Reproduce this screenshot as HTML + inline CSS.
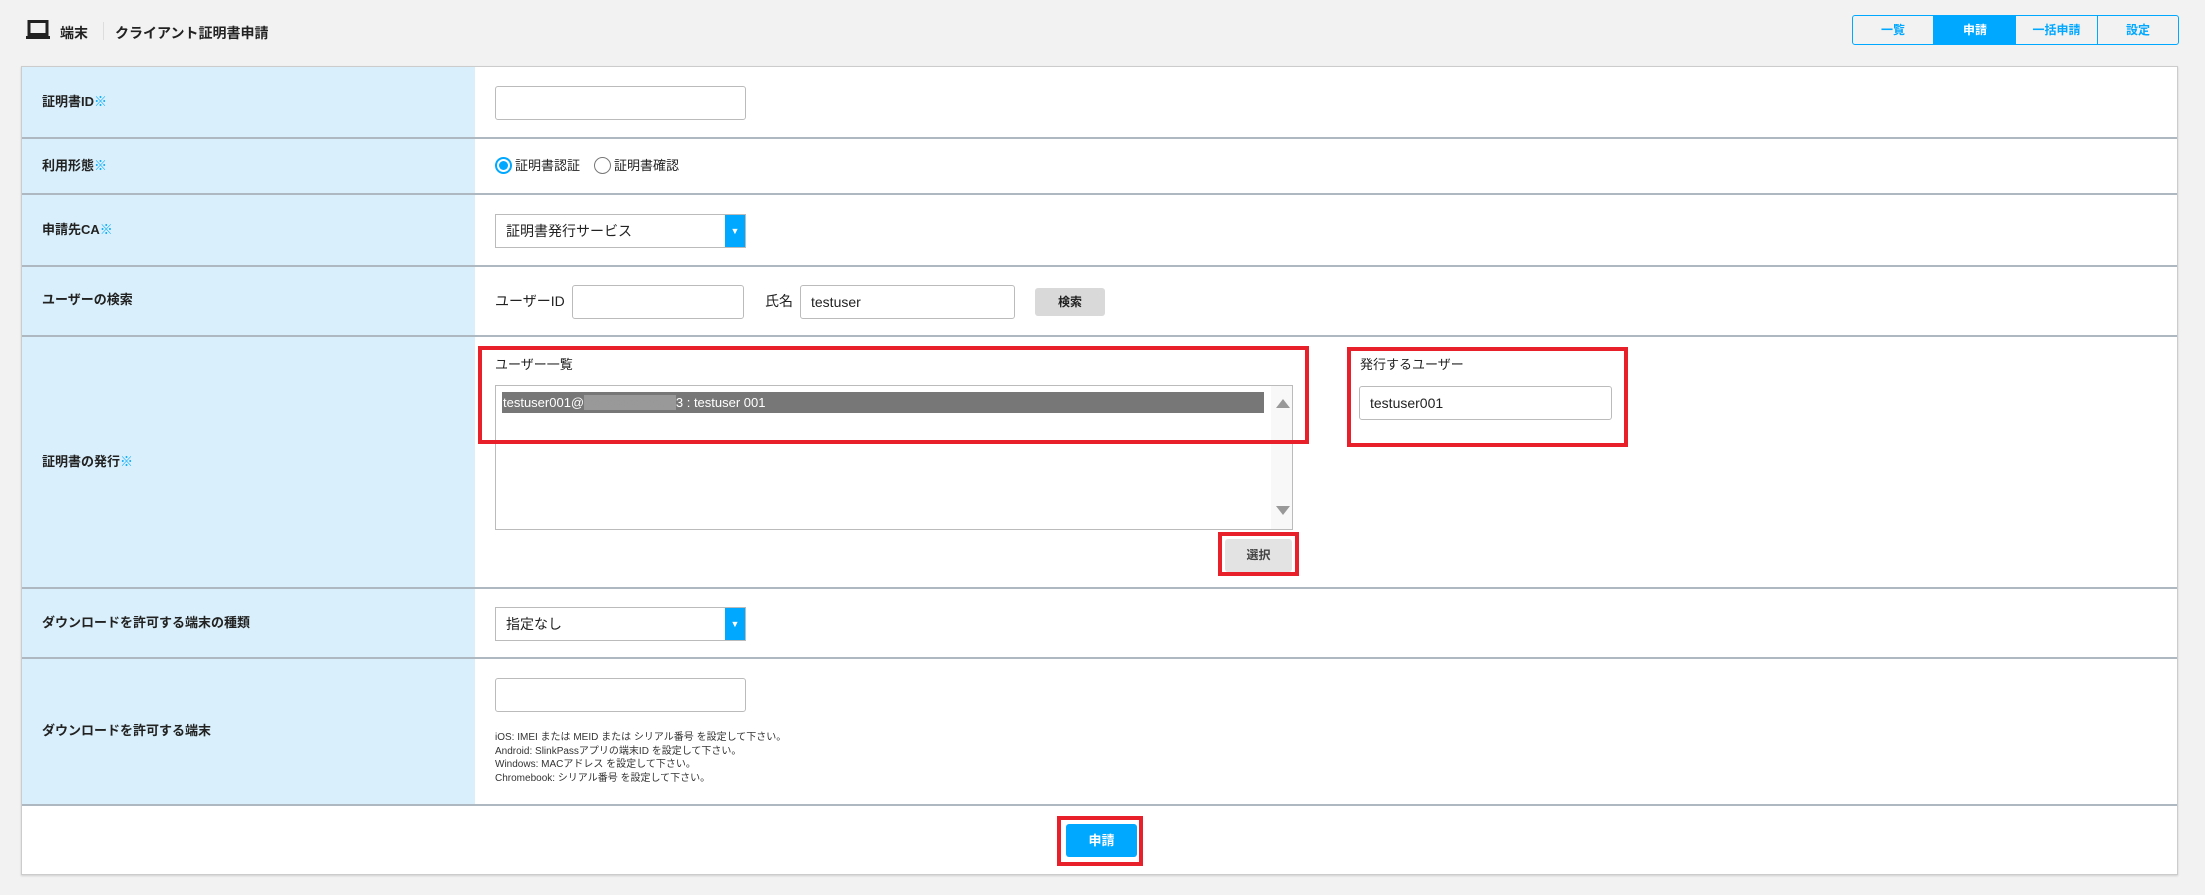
<!DOCTYPE html>
<html><head><meta charset="utf-8"><style>
*{box-sizing:border-box;margin:0;padding:0}
body{width:2205px;height:895px;background:#f2f2f2;font-family:"Liberation Sans","Noto Sans CJK JP",sans-serif;color:#222;position:relative;overflow:hidden}
.a{position:absolute}
.panel{left:21px;top:66px;width:2157px;height:809px;background:#fff;border:1px solid #ccc;box-shadow:0 1px 2px rgba(0,0,0,.15)}
.lab{left:22px;width:453px;background:#d9f0fc}
.hr{left:22px;width:2155px;height:2px;background:#aeb8c0}
.lt{left:42px;font-size:13px;font-weight:bold;line-height:16px}
.lt span{color:#00a8ff;font-weight:normal}
.inp{background:#fff;border:1px solid #bbb;border-radius:3px}
.sel{background:#fff;border:1px solid #bbb}
.sel .arr{position:absolute;right:0;top:0;bottom:0;width:20px;background:#00a8ff;color:#fff;font-size:9px;text-align:center}
.t{font-size:14px;line-height:16px}
.red{border:4px solid #e8202a}
</style></head><body>
<svg class="a" style="left:25px;top:20px" width="26" height="20" viewBox="0 0 26 20"><rect x="4" y="1.5" width="18" height="13" fill="none" stroke="#222" stroke-width="3"/><rect x="1" y="16" width="24" height="3" fill="#222"/></svg>
<div class="a" style="left:60px;top:23px;font-size:14px;font-weight:bold">端末</div>
<div class="a" style="left:103px;top:22px;width:1px;height:18px;background:#ddd"></div>
<div class="a" style="left:115px;top:23px;font-size:14px;font-weight:bold">クライアント証明書申請</div>

<div class="a" style="left:1852px;top:15px;width:327px;height:30px;border:1px solid #00a8ff;border-radius:3px;background:#f2f2f2;font-size:12px;font-weight:bold;color:#00a8ff;display:flex;overflow:hidden">
<div style="width:81px;text-align:center;line-height:28px;border-right:1px solid #00a8ff">一覧</div>
<div style="width:82px;text-align:center;line-height:28px;background:#00a8ff;color:#fff">申請</div>
<div style="width:82px;text-align:center;line-height:28px;border-right:1px solid #00a8ff">一括申請</div>
<div style="flex:1;text-align:center;line-height:28px">設定</div>
</div>

<div class="a panel"></div>
<div class="a lab" style="top:67px;height:738px"></div>
<div class="a hr" style="top:137px"></div>
<div class="a hr" style="top:193px"></div>
<div class="a hr" style="top:265px"></div>
<div class="a hr" style="top:335px"></div>
<div class="a hr" style="top:587px"></div>
<div class="a hr" style="top:657px"></div>
<div class="a hr" style="top:804px"></div>

<div class="a lt" style="top:94px">証明書ID<span>※</span></div>
<div class="a lt" style="top:158px">利用形態<span>※</span></div>
<div class="a lt" style="top:222px">申請先CA<span>※</span></div>
<div class="a lt" style="top:292px">ユーザーの検索</div>
<div class="a lt" style="top:454px">証明書の発行<span>※</span></div>
<div class="a lt" style="top:615px">ダウンロードを許可する端末の種類</div>
<div class="a lt" style="top:723px">ダウンロードを許可する端末</div>

<div class="a inp" style="left:495px;top:86px;width:251px;height:34px"></div>

<div class="a" style="left:495px;top:157px;width:17px;height:17px;border-radius:50%;border:2px solid #00a8ff;background:#fff"><div style="margin:2px;width:9px;height:9px;border-radius:50%;background:#00a8ff"></div></div>
<div class="a t" style="left:515px;top:158px;font-size:13px">証明書認証</div>
<div class="a" style="left:594px;top:157px;width:17px;height:17px;border-radius:50%;border:1px solid #777;background:#fff"></div>
<div class="a t" style="left:614px;top:158px;font-size:13px">証明書確認</div>

<div class="a sel" style="left:495px;top:214px;width:251px;height:34px"><div class="t a" style="left:10px;top:8px">証明書発行サービス</div><div class="arr" style="line-height:32px">▼</div></div>

<div class="a t" style="left:495px;top:293px">ユーザーID</div>
<div class="a inp" style="left:572px;top:285px;width:172px;height:34px"></div>
<div class="a t" style="left:765px;top:293px">氏名</div>
<div class="a inp" style="left:800px;top:285px;width:215px;height:34px"><div class="t a" style="left:10px;top:8px">testuser</div></div>
<div class="a" style="left:1035px;top:288px;width:70px;height:28px;background:#d9d9d9;border-radius:3px;font-size:12px;font-weight:bold;text-align:center;line-height:28px">検索</div>

<div class="a t" style="left:495px;top:357px;font-size:13px">ユーザー一覧</div>
<div class="a" style="left:495px;top:385px;width:798px;height:145px;border:1px solid #bbb;background:#fff"></div>
<div class="a" style="left:1271px;top:386px;width:21px;height:143px;background:#f8f8f8"></div>
<div class="a" style="left:1276px;top:399px;width:0;height:0;border-left:7px solid transparent;border-right:7px solid transparent;border-bottom:9px solid #999"></div>
<div class="a" style="left:1276px;top:506px;width:0;height:0;border-left:7px solid transparent;border-right:7px solid transparent;border-top:9px solid #999"></div>
<div class="a" style="left:502px;top:392px;width:762px;height:21px;background:#777;color:#fff;font-size:13px;line-height:21px;padding-left:1px">testuser001@<span style="background:#999;color:#999">xxxxxxxxxxxx.jp</span>3 : testuser 001</div>
<div class="a red" style="left:478px;top:346px;width:831px;height:98px"></div>

<div class="a" style="left:1225px;top:539px;width:67px;height:33px;background:#e3e3e3;border-radius:3px;font-size:12px;font-weight:bold;color:#444;text-align:center;line-height:33px">選択</div>
<div class="a red" style="left:1218px;top:532px;width:81px;height:44px"></div>

<div class="a t" style="left:1360px;top:357px;font-size:13px">発行するユーザー</div>
<div class="a inp" style="left:1359px;top:386px;width:253px;height:34px"><div class="t a" style="left:10px;top:8px">testuser001</div></div>
<div class="a red" style="left:1347px;top:347px;width:281px;height:100px"></div>

<div class="a sel" style="left:495px;top:607px;width:251px;height:34px"><div class="t a" style="left:10px;top:8px">指定なし</div><div class="arr" style="line-height:32px">▼</div></div>

<div class="a inp" style="left:495px;top:678px;width:251px;height:34px"></div>
<div class="a" style="left:495px;top:731px;font-size:10px;line-height:13.5px;color:#333">iOS: IMEI または MEID または シリアル番号 を設定して下さい。<br>Android: SlinkPassアプリの端末ID を設定して下さい。<br>Windows: MACアドレス を設定して下さい。<br>Chromebook: シリアル番号 を設定して下さい。</div>

<div class="a" style="left:1066px;top:824px;width:71px;height:33px;background:#00a8ff;border-radius:3px;color:#fff;font-size:13px;font-weight:bold;text-align:center;line-height:33px">申請</div>
<div class="a red" style="left:1057px;top:816px;width:86px;height:50px"></div>
</body></html>
